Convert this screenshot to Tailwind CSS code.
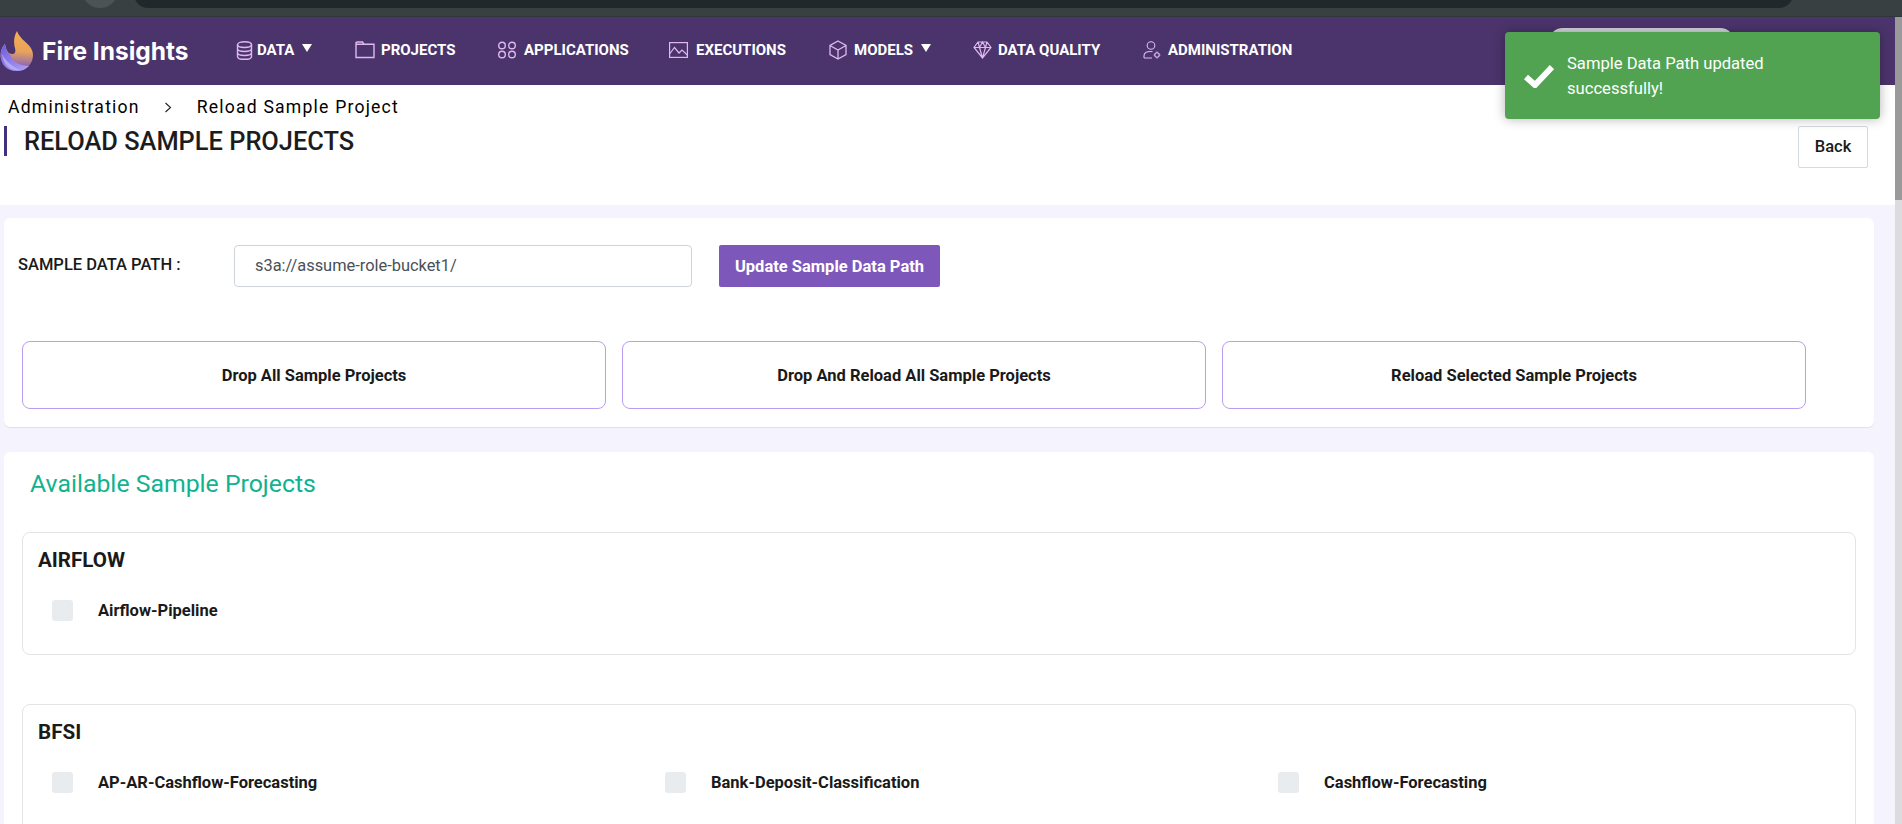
<!DOCTYPE html>
<html>
<head>
<meta charset="utf-8">
<script src="https://cdn.jsdelivr.net/npm/@tailwindcss/browser@4"></script>
</head>
<body class="h-[824px] w-[1902px] overflow-hidden bg-white font-['Roboto',sans-serif] text-[#1a1a1a]">
<div class="relative h-[824px] w-[1902px] overflow-hidden">
  <!-- browser chrome -->
  <div class="relative h-[17px] overflow-hidden border-b border-[#30373a] bg-[#384042]">
    <div class="absolute left-[82px] top-[-28px] h-[36px] w-[36px] rounded-full bg-[#4b5355]"></div>
    <div class="absolute left-[134px] top-[-20px] h-[28px] w-[1659px] rounded-b-[14px] bg-[#20282b]"></div>
  </div>
  <div class="flex h-[807px]">
    <div class="w-[1895px] min-w-0">
      <!-- nav -->
      <nav class="flex h-[68px] items-center bg-[#4b346b] text-white">
        <div class="flex w-[236px] items-center">
          <svg class="h-[42px] w-[34px] shrink-0" viewBox="0 0 34 42">
            <defs>
              <linearGradient id="fl" x1="0.55" y1="0" x2="0.5" y2="1"><stop offset="0" stop-color="#f6ae4f"/><stop offset="0.5" stop-color="#e9a35a"/><stop offset="1" stop-color="#6c52d6"/></linearGradient>
              <linearGradient id="fl2" x1="0" y1="0" x2="0.7" y2="1"><stop offset="0" stop-color="#6a5ae0"/><stop offset="1" stop-color="#a898f0"/></linearGradient>
            </defs>
            <path d="M17 1C13 8 14 14 15 18C16 22 15 24 12 24C8 24 6 20 5 14C1 18 0 24 1 29C3 37 9 41 17 41C27 41 33 33 33 25C33 14 21 12 17 1Z" fill="url(#fl)"/>
            <path d="M5 14C1 18 0 24 1 29C3 37 9 41 17 41C22 41 26 39 29 36C20 36 12 32 10 24C7 23 6 19 5 14Z" fill="url(#fl2)"/>
            <path d="M2 24C5 30 11 36 20 40C12 41 3 36 2 24Z" fill="#c3b8f7" opacity="0.7"/>
          </svg>
          <span class="ml-[8px] font-['Inter',sans-serif] text-[24.5px] font-bold leading-none">Fire Insights</span>
        </div>
        <a class="flex w-[119px] items-center pb-[2px] text-[15px] font-bold">
          <svg class="h-[19px] w-[17px] text-[#e0b8f0]" viewBox="0 0 17 19" fill="none" stroke="currentColor" stroke-width="1.4"><ellipse cx="8.5" cy="3.6" rx="7" ry="2.9"/><path d="M1.5 3.6V15.4C1.5 17 4.6 18.3 8.5 18.3S15.5 17 15.5 15.4V3.6M1.5 7.6C1.5 9.2 4.6 10.5 8.5 10.5S15.5 9.2 15.5 7.6M1.5 11.6C1.5 13.2 4.6 14.5 8.5 14.5S15.5 13.2 15.5 11.6"/></svg>
          <span class="ml-[4px]">DATA</span>
          <span class="ml-[8px] mb-[5px] h-0 w-0 border-x-[5px] border-t-[8px] border-x-transparent border-t-white"></span>
        </a>
        <a class="flex w-[142px] items-center pb-[2px] text-[15px] font-bold">
          <svg class="h-[18px] w-[20px] text-[#e0b8f0]" viewBox="0 0 20 18" fill="none" stroke="currentColor" stroke-width="1.4"><path d="M1 16.5V2.2C1 1.5 1.5 1 2.2 1H7.5L9.2 3.3H19V16.5H1ZM1 3.3H9.2"/></svg>
          <span class="ml-[6px]">PROJECTS</span>
        </a>
        <a class="flex w-[172px] items-center pb-[2px] text-[15px] font-bold">
          <svg class="h-[18px] w-[20px] text-[#e0b8f0]" viewBox="0 0 20 18" fill="none" stroke="currentColor" stroke-width="1.4"><circle cx="5" cy="4.5" r="3.3"/><circle cx="15" cy="4.5" r="3.3"/><circle cx="5" cy="13.5" r="3.3"/><circle cx="15" cy="13.5" r="3.3"/></svg>
          <span class="ml-[7px]">APPLICATIONS</span>
        </a>
        <a class="flex w-[160px] items-center pb-[2px] text-[15px] font-bold">
          <svg class="h-[16px] w-[19px] text-[#e0b8f0]" viewBox="0 0 19 16" fill="none" stroke="currentColor" stroke-width="1.2"><rect x="0.6" y="0.6" width="17.8" height="14.8"/><path d="M0.6 12L5.5 5.5L10 11L13 8L18.4 13"/></svg>
          <span class="ml-[8px]">EXECUTIONS</span>
        </a>
        <a class="flex w-[144px] items-center pb-[2px] text-[15px] font-bold">
          <svg class="h-[20px] w-[18px] text-[#e0b8f0]" viewBox="0 0 18 20" fill="none" stroke="currentColor" stroke-width="1.3"><path d="M9 1L17 5.5V14.5L9 19L1 14.5V5.5L9 1ZM1 5.5L9 10L17 5.5M9 10V19"/></svg>
          <span class="ml-[7px]">MODELS</span>
          <span class="ml-[8px] mb-[5px] h-0 w-0 border-x-[5px] border-t-[8px] border-x-transparent border-t-white"></span>
        </a>
        <a class="flex w-[170px] items-center pb-[2px] text-[15px] font-bold">
          <svg class="h-[18px] w-[19px] text-[#e0b8f0]" viewBox="0 0 19 18" fill="none" stroke="currentColor" stroke-width="1.2"><path d="M5 1H14L18 6.5L9.5 17L1 6.5L5 1ZM1 6.5H18M6.5 6.5L9.5 17L12.5 6.5M5 1L6.5 6.5L9.5 1L12.5 6.5L14 1"/></svg>
          <span class="ml-[6px]">DATA QUALITY</span>
        </a>
        <a class="flex items-center pb-[2px] text-[15px] font-bold">
          <svg class="h-[18px] w-[18px] text-[#e0b8f0]" viewBox="0 0 18 18" fill="none" stroke="currentColor" stroke-width="1.1"><circle cx="8" cy="4.5" r="3.8"/><path d="M1 17V15C1 12 4 10.5 7.5 10.5C8.5 10.5 9 10.6 9.5 10.8M1 17H9"/><circle cx="14" cy="14" r="2.2"/><path d="M14 10.6V11.8M14 16.2V17.4M10.6 14H11.8M16.2 14H17.4"/></svg>
          <span class="ml-[7px]">ADMINISTRATION</span>
        </a>
      </nav>
      <!-- header -->
      <div class="h-[120px] bg-white">
        <div class="flex pl-[8px] pt-[12px] text-[17.6px] font-normal leading-[20px] tracking-[1.2px] text-black">
          <span>Administration</span>
          <svg class="ml-[24px] mt-[5px] h-[11px] w-[8px]" viewBox="0 0 8 11" fill="none" stroke="#222" stroke-width="1.1"><path d="M1.5 1L6.5 5.5L1.5 10"/></svg>
          <span class="ml-[25px]">Reload Sample Project</span>
        </div>
        <div class="relative">
          <div class="ml-[4px] mt-[9px] flex h-[30px] items-center border-l-[3px] border-[#43307f] pl-[17px] text-[25.4px] font-medium leading-[28px] text-[#1c1c1c]">RELOAD SAMPLE PROJECTS</div>
          <button class="absolute left-[1798px] top-0 h-[42px] w-[70px] rounded-[2px] border border-[#d5d9e0] bg-white text-[16.5px] font-medium text-[#1a1a1a]">Back</button>
        </div>
      </div>
      <!-- content -->
      <div class="h-[619px] overflow-hidden bg-[#f5f3fe] pl-[4px] pt-[13px]">
        <section class="h-[209px] w-[1870px] rounded-[6px] bg-white pl-[14px] pt-[27px] shadow-[0_1px_1px_rgba(0,0,0,0.08)]">
          <div class="flex h-[42px] items-center">
            <label class="w-[216px] pb-[2px] text-[16.5px] font-medium text-[#1a1a1a]">SAMPLE DATA PATH :</label>
            <div class="flex h-[42px] w-[458px] items-center rounded-[4px] border border-[#ced4da] bg-white pl-[20px] pt-[1px] text-[16.4px] text-[#495057]">s3a://assume-role-bucket1/</div>
            <button class="ml-[27px] h-[42px] w-[221px] rounded-[2px] bg-[#7e57bb] pt-[2px] text-[16.5px] font-bold text-white">Update Sample Data Path</button>
          </div>
          <div class="ml-[4px] mt-[54px] flex gap-[16px]">
            <button class="h-[68px] w-[584px] rounded-[8px] border border-[#bc9cf0] bg-white pt-[2px] text-[16.5px] font-bold text-[#1a1a1a]">Drop All Sample Projects</button>
            <button class="h-[68px] w-[584px] rounded-[8px] border border-[#bc9cf0] bg-white pt-[2px] text-[16.5px] font-bold text-[#1a1a1a]">Drop And Reload All Sample Projects</button>
            <button class="h-[68px] w-[584px] rounded-[8px] border border-[#bc9cf0] bg-white pt-[2px] text-[16.5px] font-bold text-[#1a1a1a]">Reload Selected Sample Projects</button>
          </div>
        </section>
        <section class="mt-[25px] h-[500px] w-[1870px] rounded-[6px] bg-white pl-[18px] pt-[17px]">
          <h2 class="pl-[8px] text-[24.8px] font-normal leading-[30px] text-[#11b28f]">Available Sample Projects</h2>
          <div class="mt-[33px] h-[123px] w-[1834px] rounded-[8px] border border-[#e4e4e6] pl-[15px] pt-[15px]">
            <h3 class="text-[20.6px] font-bold leading-[24px] text-[#1a1a1a]">AIRFLOW</h3>
            <div class="ml-[14px] mt-[28px] flex h-[21px] items-center">
              <span class="h-[21px] w-[21px] rounded-[3px] bg-[#e9ecef]"></span>
              <span class="ml-[25px] pt-[2px] text-[16.5px] font-bold text-[#1a1a1a]">Airflow-Pipeline</span>
            </div>
          </div>
          <div class="mt-[49px] h-[200px] w-[1834px] rounded-[8px] border border-[#e4e4e6] pl-[15px] pt-[15px]">
            <h3 class="text-[20.6px] font-bold leading-[24px] text-[#1a1a1a]">BFSI</h3>
            <div class="ml-[14px] mt-[28px] grid grid-cols-[613px_613px_1fr]">
              <div class="flex h-[21px] items-center"><span class="h-[21px] w-[21px] rounded-[3px] bg-[#e9ecef]"></span><span class="ml-[25px] pt-[2px] text-[16.5px] font-bold text-[#1a1a1a]">AP-AR-Cashflow-Forecasting</span></div>
              <div class="flex h-[21px] items-center"><span class="h-[21px] w-[21px] rounded-[3px] bg-[#e9ecef]"></span><span class="ml-[25px] pt-[2px] text-[16.5px] font-bold text-[#1a1a1a]">Bank-Deposit-Classification</span></div>
              <div class="flex h-[21px] items-center"><span class="h-[21px] w-[21px] rounded-[3px] bg-[#e9ecef]"></span><span class="ml-[25px] pt-[2px] text-[16.5px] font-bold text-[#1a1a1a]">Cashflow-Forecasting</span></div>
            </div>
          </div>
        </section>
      </div>
    </div>
    <!-- scrollbar -->
    <div class="w-[7px] bg-[#dcdcdf]"><div class="h-[183px] bg-[#9a9a9a]"></div></div>
  </div>
  <!-- pill beneath toast -->
  <div class="absolute left-[1548px] top-[28px] h-[30px] w-[187px] rounded-full bg-[#d4d6dc]"></div>
  <!-- toast -->
  <div class="absolute left-[1505px] top-[32px] flex h-[87px] w-[375px] items-center rounded-[4px] bg-[#51a351] pl-[19px] text-white shadow-[0_0_12px_rgba(0,0,0,0.3)]">
    <svg class="h-[24px] w-[30px] shrink-0" viewBox="0 0 30 24" fill="none" stroke="#fff" stroke-width="6"><path d="M2 13L11 21L28 3"/></svg>
    <p class="ml-[13px] w-[240px] text-[16.6px] font-normal leading-[25px]">Sample Data Path updated successfully!</p>
  </div>
</div>
</body>
</html>
